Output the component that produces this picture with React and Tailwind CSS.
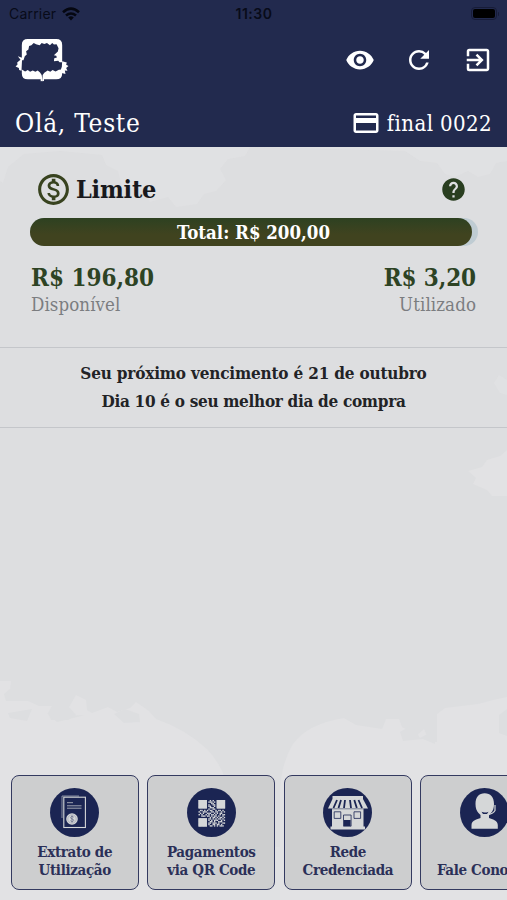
import {
  MdCreditCard,
  MdExitToApp,
  MdHelp,
  MdOutlineMonetizationOn,
  MdRefresh,
  MdVisibility,
} from "react-icons/md";

const NAVY = "#1b2553";
const LIGHT = "#d5d7d8";

const qrRows = [
  "1111110010100111111",
  "1111110111010111111",
  "1111110001100111111",
  "1111110100110111111",
  "1111110110010111111",
  "1111110011100111111",
  "0000000100110000000",
  "0110101011001011010",
  "1001110001101100101",
  "0101001110010101100",
  "1010010101101001011",
  "0011101101011010010",
  "0000000010110101101",
  "1111110110101011010",
  "1111110101011100101",
  "1111110011010011100",
  "1111110110111010011",
  "1111110100110110100",
  "1111110011010101110",
];

function Logo() {
  return (
    <svg viewBox="0 0 162 130" className="h-[43px] w-[54px]" fill="#fff">
      <path d="M20 18Q20 0 38 0H124Q142 0 142 18V70H134L130 66 117 67 118 58 126 56 124 51 117 49 124 42 129 38 131 28 125 16 117 17 112 12 105 19 96 12 88 15 80 12 74 19 63 16 56 12 49 19 42 21 40 32 33 37 35 47 29 52 25 64H20Z" />
      <path d="M20 92 30 98 38 94 45 99 53 95 61 99 68 95 75 101 80 109 83 127 77 128V122H38Q20 122 20 104Z" />
      <path d="M142 92V104Q142 122 124 122H87V127L82 128 83 109 88 102 98 95 106 99 113 94 122 98 132 93Z" />
      <path d="M8 52 21 57 19 96 12 94 11 88 1 83 7 77 6 71 16 63Z" />
      <path d="M142 67 156 71 154 78 161 82 154 88 158 96 150 95 152 106 141 103 138 92 141 84Z" />
    </svg>
  );
}

function StatementIcon() {
  return (
    <svg viewBox="0 0 49 49" className="size-[49px]">
      <circle cx="24.5" cy="24.5" r="24.5" fill={NAVY} />
      <path d="M12 30V8H29" fill="none" stroke={LIGHT} strokeWidth="0.9" opacity="0.65" />
      <rect x="13.8" y="9.2" width="21.6" height="30.3" fill="none" stroke={LIGHT} strokeWidth="1.1" />
      <path d="M17 14.7h6M17 17.8h14.5M17 20.2h14.5" stroke={LIGHT} strokeWidth="0.9" opacity="0.8" />
      <circle cx="22" cy="31" r="5.8" fill={LIGHT} />
      <circle cx="22" cy="31" r="4.2" fill="none" stroke={NAVY} strokeWidth="0.4" opacity="0.5" />
      <path
        d="M23.8 29.3c-.5-1-3.3-1.1-3.3.4 0 1.7 3.3.9 3.3 2.6 0 1.5-3 1.4-3.6.2M22 27.3v7.4"
        fill="none"
        stroke={NAVY}
        strokeWidth="0.5"
        opacity="0.8"
      />
    </svg>
  );
}

function QrIcon() {
  return (
    <svg viewBox="0 0 49 49" className="size-[49px]">
      <circle cx="24.5" cy="24.5" r="24.5" fill={NAVY} />
      <g fill={LIGHT}>
        {qrRows.map((row, y) =>
          row.split("").map((cell, x) =>
            cell === "1" ? (
              <rect key={`${x}-${y}`} x={11.5 + x * 1.4} y={12 + y * 1.4} width="1.42" height="1.42" />
            ) : null
          )
        )}
        <path d="M11.5 12h8.4v8.4h-8.4zM29.7 12h8.4v8.4h-8.4zM11.5 30.2h8.4v8.4h-8.4z" />
      </g>
    </svg>
  );
}

function StoreIcon() {
  return (
    <svg viewBox="0 0 49 49" className="size-[49px]">
      <circle cx="24.5" cy="24.5" r="24.5" fill={NAVY} />
      <path d="M9.5 8h30.5v3.2H9.5zM9 19.5h31.5V38.5H42v3H7.5v-3H9z" fill={LIGHT} />
      <path d="M9.5 11h30.5l5 9.5H5z" fill={LIGHT} />
      <path
        d="M14 12l-3.5 8M18 12l-2.5 8M22 12l-1 8M27 12l1 8M31.3 12l2.5 8M35.5 12l3.5 8"
        stroke={NAVY}
        strokeWidth="1.8"
      />
      <path d="M9 20.8h31.5" stroke={NAVY} strokeWidth="0.5" />
      <path
        d="M11.2 23.8h6.6v6.6h-6.6zM31 23.8h6.6v6.6H31zM20.5 27h7.6v11.2h-7.6z"
        fill="none"
        stroke={NAVY}
        strokeWidth="0.8"
      />
      <rect x="21" y="32" width="6.6" height="6" fill={NAVY} />
    </svg>
  );
}

function SupportIcon() {
  return (
    <svg viewBox="0 0 49 49" className="size-[49px]">
      <circle cx="24.5" cy="24.5" r="24.5" fill={NAVY} />
      <path
        d="M15.5 16C15.5 9 19 5.3 24.7 5.3S34 9 34 16c0 4-.8 7-3.5 9.5l-1.5 2V30c3.5 1.5 8.5 2 8.8 7v3.8H11.5V37c.3-5 5.5-5.5 9-7v-3l-2-2c-2-2-3-5-3-9z"
        fill={LIGHT}
      />
      <path d="M35 17v5.5c-1.2 2.5-3.5 3.5-7 4" fill="none" stroke={LIGHT} strokeWidth="1.2" />
      <path d="M21.5 23.8c2 1 4.5 1 7-.1l-1.5 2.2h-4z" fill={NAVY} />
    </svg>
  );
}

function WifiIcon() {
  return (
    <svg viewBox="0 0 18 14" className="h-[14px] w-[18px]">
      <g fill="none" stroke="#050711" strokeWidth="2.6">
        <path d="M1 5.2Q9-1.8 17 5.2" />
        <path d="M4 8.6Q9 4.4 14 8.6" />
      </g>
      <path d="M6.2 10.4Q9 8.2 11.8 10.4L9 13.4z" fill="#050711" />
    </svg>
  );
}

// faint foliage silhouettes behind the page content
function Foliage() {
  return (
    <svg viewBox="0 0 507 753" className="absolute inset-0 h-full w-full" fill="#e2e2e4">
      <path
        d="M0 0H507V14L496 16 490 27 478 30 468 24 455 30 445 27 437 16 420 14 405 4 250 0 245 9 228 12 220 22 226 33 216 44 204 47 197 57 176 60 168 50 150 55 143 42 122 40 118 24 106 18 102 8 60 4 24 7 8 20 3 36 0 34Z"
        opacity="0.6"
      />
      <path d="M507 303 500 309 487 313 482 320 468 324 476 331 473 337 487 343 492 349 507 349Z" />
      <path d="M507 233 499 228 494 236 500 246 507 248Z" opacity="0.6" />
      <path d="M0 534H11L10 542 4 547 6 554H28L39 559 52 559 48 566 51 573 68 573 76 568 69 560 76 548 86 553 87 563 92 566 108 560 117 565 130 561 136 555 149 564 156 572Q185 582 207 602Q228 624 230 656V753H0Z" />
      <path d="M507 550 493 553 478 557 445 561 437 567V595L430 595 424 582 417 588 402 580 399 572 386 572 382 582 356 578 344 571Q307 577 293 597Q281 616 280 646V753H507Z" />
      <path d="M228 700H282V753H228Z" opacity="0.6" />
      <g fill="#dddee0">
        <path d="M8 566l24-4-5 12-17-3zM47 566l18 3 20-1-28 7zM114 567l11-5 14 5 1 8-16 1zM400 585l12-7 8 13 15-8v14l-12-5-20 2zM507 562l-8 6v18l8 3z" />
      </g>
    </svg>
  );
}

const actions = [
  { icon: StatementIcon, lines: ["Extrato de", "Utilização"] },
  { icon: QrIcon, lines: ["Pagamentos", "via QR Code"] },
  { icon: StoreIcon, lines: ["Rede", "Credenciada"] },
  { icon: SupportIcon, lines: ["Fale Conosco"] },
];

export default function App() {
  return (
    <div className="flex h-[900px] w-[507px] flex-col overflow-hidden bg-[#dddee0] font-['DejaVu_Serif_Condensed','DejaVu_Serif',serif]">
      <header className="h-[147px] shrink-0 bg-[#222a4e] text-white">
        <div className="grid h-7 grid-cols-3 items-center pr-[8px] pb-px pl-[9px] font-['Inter',sans-serif] text-[14px] text-[#080b19]">
          <div className="flex items-center gap-[6px]">
            <span className="tracking-[0.2px]">Carrier</span>
            <WifiIcon />
          </div>
          <span className="text-center font-semibold tracking-[0.5px]">11:30</span>
          <div className="flex items-center justify-end gap-px">
            <div className="rounded-[4px] border border-[#171c38] p-px">
              <div className="h-[9px] w-[22px] rounded-[2px] bg-black" />
            </div>
            <div className="h-1 w-px rounded-r bg-[#171c38]" />
          </div>
        </div>

        <div className="flex h-[64px] items-center justify-between pr-[14px] pl-[15px]">
          <Logo />
          <div className="flex items-center gap-[29px]">
            <MdVisibility className="size-[30px]" />
            <MdRefresh className="size-[30px]" />
            <MdExitToApp className="size-[30px]" />
          </div>
        </div>

        <div className="flex h-[62px] items-center justify-between pr-[15px] pl-[15px]">
          <span className="pt-px text-[26px] tracking-[0.75px]">Olá, Teste</span>
          <div className="flex items-center gap-[6px]">
            <MdCreditCard className="size-[30px]" />
            <span className="pt-px text-[22px] tracking-[0.4px]">final 0022</span>
          </div>
        </div>
      </header>

      <main className="relative flex-1">
        <Foliage />
        <div className="relative flex h-full flex-col">
          <section className="h-[200px] px-[30px] pt-[23px]">
            <div className="flex h-[38px] items-center justify-between pr-[10px] pl-[5px]">
              <div className="flex items-center gap-[4px]">
                <MdOutlineMonetizationOn className="size-[37px] text-[#38431f]" />
                <h1 className="pt-[2px] text-[25px] font-bold tracking-[-0.2px] text-[#18191d]">Limite</h1>
              </div>
              <MdHelp className="size-[27px] text-[#293e20]" />
            </div>

            <div className="mt-[10px] flex h-7 w-[448px] rounded-full bg-[#bfccd3]">
              <div className="flex w-[442px] items-center justify-center rounded-full bg-linear-to-b from-[#2d4121] to-[#40431f] to-60% pt-[2px] pl-[5px] text-[18.5px] font-bold text-white">
                Total: R$ 200,00
              </div>
            </div>

            <div className="mt-[17px] flex justify-between pr-px pl-px">
              <div>
                <p className="text-[24px] leading-[30px] font-bold text-[#2d4324]">R$ 196,80</p>
                <p className="text-[18.5px] leading-[24px] tracking-[0.1px] text-[#7b7d80]">Disponível</p>
              </div>
              <div className="text-right">
                <p className="text-[24px] leading-[30px] font-bold tracking-[-0.1px] text-[#2d4324]">R$ 3,20</p>
                <p className="text-[18.5px] leading-[24px] tracking-[0.1px] text-[#7b7d80]">Utilizado</p>
              </div>
            </div>
          </section>

          <section className="h-[81px] border-y border-[#c4c6ca] pt-[11px] text-center text-[17px] leading-[28px] font-bold tracking-[-0.18px] text-[#222326]">
            <p>Seu próximo vencimento é 21 de outubro</p>
            <p className="tracking-[-0.3px]">Dia 10 é o seu melhor dia de compra</p>
          </section>

          <nav className="mt-auto mb-[10px] flex gap-[8.6px] overflow-hidden pl-[10.7px]">
            {actions.map(({ icon: Icon, lines }) => (
              <button
                key={lines[0]}
                className="flex h-[115px] w-[128px] shrink-0 flex-col items-center rounded-[8px] border border-[#343a60] bg-[#cdcecf] pt-[12px]"
              >
                <Icon />
                <span className="mt-[6px] flex h-9 flex-col justify-end text-[15px] leading-[18px] font-bold tracking-[-0.35px] whitespace-nowrap text-[#2b3058]">
                  {lines.map((line) => (
                    <span key={line}>{line}</span>
                  ))}
                </span>
              </button>
            ))}
          </nav>
        </div>
      </main>
    </div>
  );
}
